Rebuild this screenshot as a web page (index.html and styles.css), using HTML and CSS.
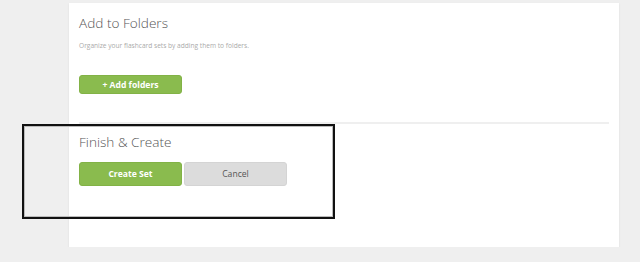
FILE: index.html
```html
<!DOCTYPE html>
<html lang="en">
<head>
    <meta charset="UTF-8">
    <meta name="viewport" content="width=device-width, initial-scale=1.0">
    <title>Create Set</title>
    <link rel="stylesheet" href="styles.css">
</head>
<body>
    <div class="card">
        <div class="section folders">
            <h2>Add to Folders</h2>
            <p class="hint">Organize your flashcard sets by adding them to folders.</p>
            <button class="btn btn-green btn-folders">+ Add folders</button>
        </div>
        <hr class="divider">
        <div class="section finish">
            <h2>Finish &amp; Create</h2>
            <div class="actions">
                <button class="btn btn-green">Create Set</button>
                <button class="btn btn-grey">Cancel</button>
            </div>
        </div>
    </div>

    <div class="highlight"></div>
</body>
</html>
```

FILE: styles.css
```css
body {
    font-family: "Open Sans", Arial, sans-serif;
    background-color: #efefef;
    margin: 0;
    padding: 3px 0 0 0;
}
.card {
    position: relative;
    margin-left: 69px;
    width: 550px;
    height: 244px;
    background: #fff;
    box-shadow: 0 1px 2px rgba(0, 0, 0, 0.08);
}
.section {
    padding: 10px 10px 0 10px;
}
.section h2 {
    margin: 0;
    font-size: 13.6px;
    line-height: 20px;
    font-weight: 300;
    color: #555;
}
.hint {
    margin: 8px 0 0 0;
    font-size: 6.6px;
    line-height: 10px;
    color: #aaa;
}
.btn {
    font-family: "Open Sans", Arial, sans-serif;
    font-size: 8.6px;
    font-weight: 700;
    width: 103px;
    border-radius: 3px;
    cursor: pointer;
    padding: 0;
}
.btn-green {
    background: #8abb4e;
    border: 1px solid #82b246;
    color: #fff;
}
.btn-grey {
    background: #dcdcdc;
    border: 1px solid #d4d4d4;
    color: #555;
    font-weight: 400;
}
.btn-folders {
    margin-top: 24px;
    height: 19px;
    display: block;
}
.divider {
    border: none;
    height: 2px;
    background: #efefef;
    margin: 28px 10px 0 10px;
}
.finish {
    padding-top: 8px;
}
.actions {
    display: flex;
    gap: 2px;
    margin-top: 10px;
}
.actions .btn {
    height: 24px;
}
.highlight {
    position: absolute;
    left: 22px;
    top: 124px;
    width: 309px;
    height: 91px;
    border: 2px solid #111;
    box-shadow: inset 0 0 0 1px #bbb;
}
```
